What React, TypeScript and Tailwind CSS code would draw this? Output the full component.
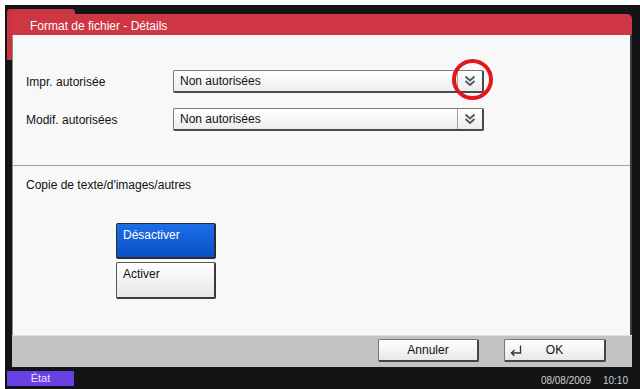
function Chevrons() {
  return (
    <svg width="12" height="12" viewBox="0 0 12 12" fill="none" stroke="#555" strokeWidth="1.7">
      <polyline points="1.5,1.5 6,5.5 10.5,1.5" />
      <polyline points="1.5,6 6,10 10.5,6" />
    </svg>
  );
}

function EnterIcon() {
  return (
    <svg width="12" height="11" viewBox="0 0 12 11" fill="none" stroke="#333" strokeWidth="1.3">
      <polyline points="10.5,0.5 10.5,8 1.5,8" />
      <polyline points="4.5,5 1.5,8 4.5,11" />
    </svg>
  );
}

function Select({ circled }: { circled?: boolean }) {
  return (
    <div className="relative flex h-[23px] w-[311px] rounded-[2px] border border-[#7a7a7a] border-b-2 border-r-2 border-b-[#4a4a4a] border-r-[#4a4a4a] bg-gradient-to-b from-white to-[#ededed]">
      <div className="flex-1 pl-[6px] text-[12px] leading-[20px] text-[#111]">Non autorisées</div>
      <div className="flex w-[25px] items-center justify-center border-l border-[#a0a0a0]">
        <Chevrons />
      </div>
      {circled && (
        <div className="absolute left-[278px] top-[-12px] h-[41px] w-[41px] rounded-full border-[4px] border-[#e3151d]" />
      )}
    </div>
  );
}

export default function App() {
  return (
    <div className="h-[389px] w-[640px] overflow-hidden bg-white pl-[5px] pt-[5px] font-['Liberation_Sans',Arial,sans-serif]">
      <div className="relative flex h-full flex-col bg-[#121416]">
        {/* tab behind the dialog */}
        <div className="absolute left-[2px] top-[4px] h-[51px] w-[68px] rounded-t-[3px] bg-[#c8343f]" />

        {/* Dialog */}
        <div className="relative ml-[7px] mr-[8px] mt-[9px] flex h-[353px] flex-col">
          <div className="h-[21px] rounded-t-[5px] bg-[#cd3642] pl-[18px] text-[12px] leading-[24px] text-white">
            Format de fichier - Détails
          </div>

          <div className="flex h-[300px] flex-col border-l border-r-2 border-l-[#8c8c8c] border-r-[#3c3c3c] bg-[#f8f8f8] pl-[13px] pt-[35px] text-[12px] text-[#111]">
            <div className="flex h-[23px] items-center">
              <div className="w-[147px]">Impr. autorisée</div>
              <Select circled />
            </div>
            <div className="mt-[15px] flex h-[23px] items-center">
              <div className="w-[147px]">Modif. autorisées</div>
              <Select />
            </div>

            <div className="-ml-[13px] mt-[34px] h-px bg-[#a0a0a0]" />

            <div className="mt-[12px] leading-[14px]">Copie de texte/d'images/autres</div>

            <div className="ml-[90px] mt-[31px] flex flex-col gap-[3px]">
              <div className="h-[36px] w-[100px] rounded-[2px] border border-[#2c2c2c] border-b-2 border-r-2 bg-gradient-to-b from-[#1c6ee8] to-[#0a4fc4] pl-[6px] pt-[4px] leading-[14px] text-white">
                Désactiver
              </div>
              <div className="h-[37px] w-[100px] rounded-[2px] border border-[#555] border-b-2 border-r-2 border-b-[#3a3a3a] border-r-[#3a3a3a] bg-gradient-to-b from-white to-[#e6e6e6] pl-[6px] pt-[4px] leading-[14px]">
                Activer
              </div>
            </div>
          </div>

          <div className="flex h-[32px] justify-end gap-[25px] border-t border-[#e2e2e2] bg-[#c3c3c3] pr-[26px] pt-[3px] text-[12px] text-[#111]">
            <div className="flex h-[23px] w-[101px] items-center justify-center rounded-[2px] border border-[#777] border-b-2 border-r-2 border-b-[#444] border-r-[#444] bg-gradient-to-b from-white to-[#e8e8e8]">
              Annuler
            </div>
            <div className="flex h-[23px] w-[102px] items-center rounded-[2px] border border-[#777] border-b-2 border-r-2 border-b-[#444] border-r-[#444] bg-gradient-to-b from-white to-[#e8e8e8]">
              <div className="ml-[5px] w-[12px]">
                <EnterIcon />
              </div>
              <div className="flex-1 text-center">OK</div>
              <div className="w-[17px]" />
            </div>
          </div>
        </div>

        {/* status bar */}
        <div className="flex flex-1 items-start justify-between pt-[4px]">
          <div className="ml-[2px] h-[15px] w-[67px] bg-[#6a3fe2] text-center text-[11px] leading-[15px] text-[#e6e0ff]">
            État
          </div>
          <div className="flex gap-[12px] pr-[12px] pt-[2px] text-[10px] text-[#cfcfcf]">
            <span>08/08/2009</span>
            <span>10:10</span>
          </div>
        </div>
      </div>
    </div>
  );
}
